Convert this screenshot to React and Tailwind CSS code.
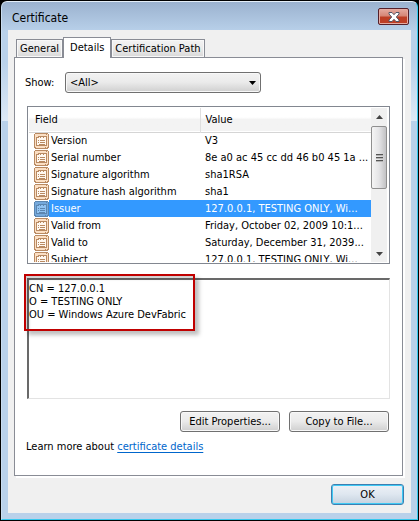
import React, { useState } from "react";

const fields = [
  ["Version", "V3"],
  ["Serial number", "8e a0 ac 45 cc dd 46 b0 45 1a ..."],
  ["Signature algorithm", "sha1RSA"],
  ["Signature hash algorithm", "sha1"],
  ["Issuer", "127.0.0.1, TESTING ONLY, Wi..."],
  ["Valid from", "Friday, October 02, 2009 10:1..."],
  ["Valid to", "Saturday, December 31, 2039..."],
  ["Subject", "127.0.0.1, TESTING ONLY, Wi..."],
];

const issuerText = "CN = 127.0.0.1\nO = TESTING ONLY\nOU = Windows Azure DevFabric";

function FieldIcon({ selected }) {
  const line = selected ? "#5c86b0" : "#b98a62";
  const fill = selected ? "#75a9dc" : "#fbdfc4";
  const page = selected ? "#91c3f2" : "#fff8f0";
  return (
    <svg width="15" height="16" viewBox="0 0 15 16" aria-hidden="true" className="block" shapeRendering="crispEdges">
      <path d="M1 0h13v1h1v14h-1v1H1v-1H0V1h1z" fill={line} />
      <path d="M1 1h13v13H1z" fill={fill} />
      <path d="M2 14h9v1H2zM12 14h1v1h-1z" fill={fill} />
      <path d="M12 1h1v1h-1z" fill={line} />
      <path d="M2 4h2V3h9v10H2z" fill={line} />
      <path d="M3 5h2V4h1v1h1V4h2v1h1V4h2v8H3z" fill={page} />
      <path d="M4 7h1v1H4zM6 7h5v1H6zM4 9h1v1H4zM6 9h5v1H6zM5 11h6v1H5z" fill={line} />
    </svg>
  );
}

function PushButton({ children }) {
  return (
    <button
      type="button"
      className="h-[21px] w-[100px] rounded-[3px] border border-[#707070] bg-linear-to-b from-[#f2f2f2] from-0% via-[#ebebeb] via-48% to-[#cfcfcf] text-center inset-shadow-[0_0_0_1px_#f8f8f8]"
    >
      {children}
    </button>
  );
}

function Tab({ label, active, onClick }) {
  return (
    <button
      type="button"
      role="tab"
      aria-selected={active}
      onClick={onClick}
      className={
        active
          ? "relative z-10 -mb-px h-[21px] border border-b-0 border-[#898c95] bg-white px-[6px] pb-[2px]"
          : "h-[18px] border border-b-0 border-[#898c95] bg-linear-to-b from-[#f3f3f3] via-[#ebebeb] to-[#d8d8d8] px-[3px] inset-shadow-[0_0_0_1px_#f8f8f8]"
      }
    >
      {label}
    </button>
  );
}

function ScrollBar() {
  return (
    <div className="mr-[2px] flex w-4 flex-col bg-[#f0f0f0]">
      <button type="button" aria-label="Scroll up" className="flex h-[18px] items-center justify-center">
        <svg width="7" height="4" viewBox="0 0 7 4" aria-hidden="true">
          <path d="M0 4L3.500 0L7 4z" fill="#444" />
        </svg>
      </button>
      <div className="flex h-[63px] flex-col items-center justify-center rounded-[2px] border border-[#8f8f8f] bg-linear-to-r from-[#f5f5f5] via-[#e4e4e6] to-[#c2c2c4]">
        <svg width="7" height="8" viewBox="0 0 7 8" aria-hidden="true" shapeRendering="crispEdges">
          <path d="M0 0h7v1H0zM0 3h7v1H0zM0 6h7v1H0z" fill="#555" />
          <path d="M0 1h7v1H0zM0 4h7v1H0zM0 7h7v1H0z" fill="#b4b4b4" />
        </svg>
      </div>
      <button type="button" aria-label="Scroll down" className="mt-auto flex h-4 items-center justify-center">
        <svg width="7" height="4" viewBox="0 0 7 4" aria-hidden="true">
          <path d="M0 0H7L3.500 4z" fill="#444" />
        </svg>
      </button>
    </div>
  );
}

function FieldList() {
  return (
    <div className="flex h-[158px] overflow-hidden border border-[#828790] bg-white pt-px pb-px pl-px">
      <div className="min-w-0 flex-1 overflow-hidden">
        <table className="w-full table-fixed border-collapse text-left whitespace-nowrap">
          <colgroup>
            <col className="w-[20px]" />
            <col className="w-[151px]" />
            <col />
          </colgroup>
          <thead>
            <tr className="h-[24px] border-b border-[#d5d5d5] bg-linear-to-b from-white from-40% to-[#f3f3f3] to-50%">
              <th colSpan={2} className="border-r border-[#dfdfdf] p-0 pl-[6px] font-normal">Field</th>
              <th className="p-0 pl-[5px] font-normal">Value</th>
            </tr>
          </thead>
          <tbody>
            {fields.map(([name, value], i) => {
              const selected = name === "Issuer";
              return (
                <tr key={i} className="h-[17px]">
                  <td className="p-0 pl-[5px]">
                    <FieldIcon selected={selected} />
                  </td>
                  <td className={selected ? "bg-[#3399ff] p-0 pl-[2px] text-white" : "p-0 pl-[2px]"}>{name}</td>
                  <td className={selected ? "bg-[#3399ff] p-0 pl-[5px] text-white" : "p-0 pl-[5px]"}>{value}</td>
                </tr>
              );
            })}
          </tbody>
        </table>
      </div>
      <ScrollBar />
    </div>
  );
}

export default function App() {
  const [tab, setTab] = useState("Details");
  return (
    <div className="bg-black p-px font-['DejaVu_Sans_Condensed','Noto_Sans',sans-serif] text-[11px] leading-[13px] text-black">
      <main className="rounded-t-[6px] border border-[#35c8ee] border-t-[#e4eef8] border-l-[#c9dcef] bg-[linear-gradient(#9bb2cf_0,#b9d1ea_30px,#b9d1ea_60px,#dde9f6_119px,#b9d1ea_119px)] px-[6px] pb-[6px]">
        <header className="flex h-[28px] items-center justify-between">
          <h1 className="pt-[4px] pl-1 text-[12px] leading-4">Certificate</h1>
          <button
            type="button"
            aria-label="Close"
            className="mt-px mr-[2px] flex h-[17px] w-[31px] items-center justify-center rounded-[2px] border border-[#55202a] bg-linear-to-b from-[#e5aaa0] from-0% via-[#d58474] via-48% to-[#bd3e25] to-52% inset-shadow-[0_0_0_1px_#e6aaa0]"
          >
            <svg width="12" height="10" viewBox="0 0 12 10" aria-hidden="true">
              <path d="M1 .5h3L6 2.700 8 .5h3V2L8.300 5 11 8v1.500H8L6 7.300 4 9.500H1V8l2.700-3L1 2z" fill="#fff" stroke="#535666" />
            </svg>
          </button>
        </header>

        <div className="bg-[#f0f0f0] px-[6px] pt-[7px] pb-2">
          <div role="tablist" className="flex h-[20px] items-end pl-[2px]">
            {["General", "Details", "Certification Path"].map((label) => (
              <Tab key={label} label={label} active={tab === label} onClick={() => setTab(label)} />
            ))}
          </div>

          <section className="mr-[2px] border border-[#898c95] bg-white px-3 shadow-[2px_2px_0_#fff]">
            <div className="flex items-center pt-[14px]">
              <label htmlFor="show" className="-ml-[2px] w-10">Show:</label>
              <div className="relative w-[196px]">
                <select
                  id="show"
                  className="h-[21px] w-full appearance-none rounded-[3px] border border-[#707070] bg-linear-to-b from-[#f2f2f2] via-[#ebebeb] via-48% to-[#cfcfcf] pl-1 inset-shadow-[0_0_0_1px_#f8f8f8]"
                >
                  <option>&lt;All&gt;</option>
                </select>
                <svg width="7" height="4" viewBox="0 0 7 4" aria-hidden="true" className="pointer-events-none absolute top-[9px] right-[5px]">
                  <path d="M0 0H7L3.500 4z" fill="#000" />
                </svg>
              </div>
            </div>

            <div className="mt-[13px]">
              <FieldList />
            </div>

            <div className="relative mt-[14px]">
              <textarea
                readOnly
                aria-label="Field value"
                value={issuerText}
                className="block h-[121px] w-full resize-none border-t-2 border-r border-b border-l-2 border-t-[#696969] border-r-[#e3e3e3] border-b-[#e3e3e3] border-l-[#696969] bg-white pt-[2px] outline-none"
              />
              <div className="pointer-events-none absolute -top-1 -left-[3px] h-[57px] w-[171px] border-2 border-[#c00000] shadow-[4px_4px_4px_#00000040,inset_3px_3px_3px_#00000030]" />
            </div>

            <div className="mt-3 flex justify-end gap-[9px] pr-px">
              <PushButton>Edit Properties...</PushButton>
              <PushButton>Copy to File...</PushButton>
            </div>

            <p className="-ml-px pt-2 pb-[22px]">
              Learn more about{" "}
              <a href="#certificate-details" className="text-[#0066cc] underline underline-offset-2">certificate details</a>
            </p>
          </section>

          <footer className="flex justify-end pt-2 pr-px">
            <button
              type="button"
              className="h-[21px] w-[73px] rounded-[3px] border border-[#3c7fb1] bg-linear-to-b from-[#edf1f6] via-[#dfe7f0] via-48% to-[#c5d2df] inset-shadow-[0_0_0_1px_#3fc9f4]"
            >
              OK
            </button>
          </footer>
        </div>
      </main>
    </div>
  );
}
